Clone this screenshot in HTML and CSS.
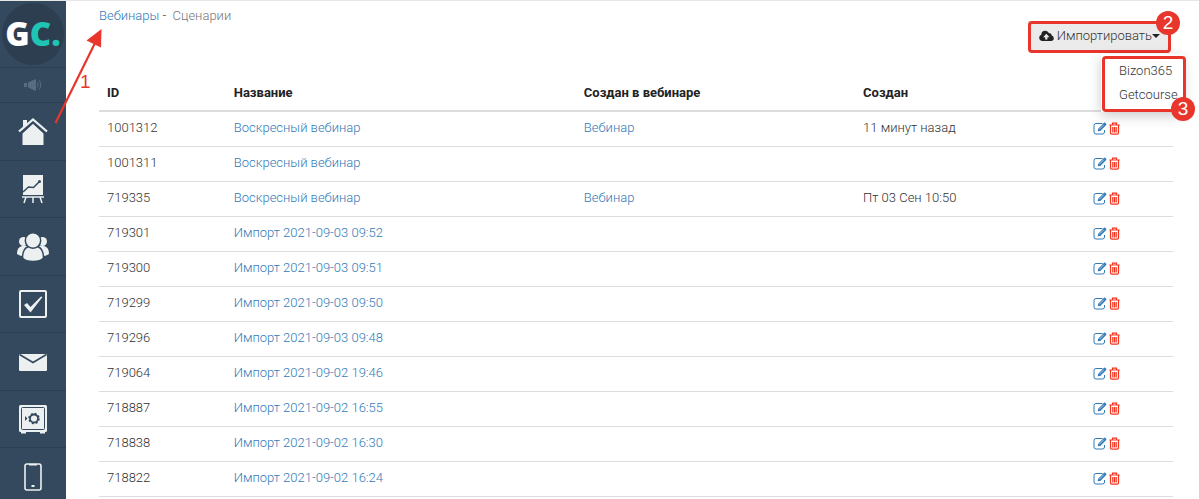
FILE: index.html
```
<!DOCTYPE html>
<html lang="ru">
<head>
    <meta charset="utf-8">
    <title>Сценарии</title>
    <link rel="stylesheet" href="styles.css">
</head>

<body>
    <svg class="sprite" aria-hidden="true">
        <symbol id="edit" viewBox="0 0 14 13">
            <path d="M9.5 1.5H3Q1 1.5 1 3.5v6.500Q1 12 3 12h6.500Q11.500 12 11.500 10V8" fill="none" stroke="currentColor" stroke-width="1"/>
            <path d="M4.700 9.300l.5-2.600 5.800-5.900q.6-.5 1.200 0l1 1q.5.6 0 1.200L7.300 8.900z" fill="currentColor"/>
            <path d="M6.300 7.300l4.500-4.600" stroke="#fff" stroke-width=".6"/>
        </symbol>
        <symbol id="trash" viewBox="0 0 11 13">
            <path d="M.3 3h10.400M3.500 2.800V1.200h4v1.600M1.500 3.500v7.300q0 1.400 1.300 1.400h5.400q1.300 0 1.300-1.400V3.500M3.800 5v5.500M5.500 5v5.500M7.200 5v5.500" fill="none" stroke="currentColor" stroke-width="1.200"/>
        </symbol>
    </svg>

    <nav class="sidebar">
        <a class="logo" href="#" aria-label="GetCourse"><span class="logo-circle">G<span class="logo-c">C.</span></span></a>
        <a class="notice" href="#" aria-label="Уведомления">
            <svg width="20" height="14" viewBox="0 0 20 14" fill="#586d84">
                <path d="M1 5h3v4H1zM5 4.500L13 1v12L5 9.500z"/>
                <path d="M14.500 4.500q1.500 2.500 0 5M16.500 2.500q3 4.500 0 9" fill="none" stroke="#586d84"/>
            </svg>
        </a>
        <ul class="menu">
            <li><a href="#" aria-label="Главная">
                <svg width="30" height="28" viewBox="0 0 30 28" fill="#ecf0f1">
                    <path d="M5 2h4v5l-4 4zM4.500 15L15 5.500 25.500 15v12h-21z"/>
                    <path d="M2.500 14.500L15 3l12.500 11.500" fill="none" stroke="#34495e" stroke-width="4"/>
                    <path d="M1 13.500L15 1.500l14 12" fill="none" stroke="#ecf0f1" stroke-width="2.200"/>
                </svg>
            </a></li>
            <li><a href="#" aria-label="Статистика">
                <svg width="22" height="30" viewBox="0 0 22 30" fill="#ecf0f1">
                    <path d="M1 1h20v20H1z"/>
                    <path d="M1 18l5.500-5 5 .5L17 8" fill="none" stroke="#34495e" stroke-width="1.500"/>
                    <circle cx="17.500" cy="7.500" r="1.500" fill="#34495e"/>
                    <path d="M0 23h22M4 23l-2 6M11 23v6M18 23l2 6" fill="none" stroke="#ecf0f1" stroke-width="1.500"/>
                </svg>
            </a></li>
            <li><a href="#" aria-label="Пользователи">
                <svg width="34" height="30" viewBox="0 0 34 30" fill="#ecf0f1">
                    <circle cx="7.500" cy="9.500" r="4.500"/>
                    <circle cx="26.500" cy="9.500" r="4.500"/>
                    <path d="M1 22q0-7 5-8h6v10q-7 1-11-2zM33 22q0-7-5-8h-6v10q7 1 11-2z"/>
                    <path d="M6.500 26q0-9.500 6-11.500h9q6 2 6 11.500-3 3.500-10.500 3.500T6.500 26z" stroke="#34495e" stroke-width="1.500"/>
                    <circle cx="17" cy="8.500" r="7.700" stroke="#34495e" stroke-width="1.500"/>
                </svg>
            </a></li>
            <li><a href="#" aria-label="Задачи">
                <svg width="30" height="30" viewBox="0 0 30 30" fill="#ecf0f1">
                    <rect x="2" y="2" width="26" height="26" rx="1" fill="none" stroke="#ecf0f1" stroke-width="2"/>
                    <path d="M6 16l3-2 3.500 4L23 7.500l1.500.5L12.500 23.500z"/>
                </svg>
            </a></li>
            <li><a href="#" aria-label="Сообщения">
                <svg width="28" height="18" viewBox="0 0 28 18" fill="#ecf0f1">
                    <rect x="0" y="1" width="28" height="17" rx="1"/>
                    <path d="M.5 1.500L14 9.500l13.500-8" fill="none" stroke="#34495e" stroke-width="1.600"/>
                </svg>
            </a></li>
            <li><a href="#" aria-label="Финансы">
                <svg width="30" height="30" viewBox="0 0 30 30" fill="#ecf0f1">
                    <rect x="1" y="1" width="28" height="27" rx="1.500"/>
                    <path d="M3 28h5v1.500H3zM22 28h5v1.500h-5z"/>
                    <rect x="3.500" y="3.500" width="23" height="22" rx="1" fill="none" stroke="#34495e"/>
                    <circle cx="16" cy="14.500" r="4" fill="none" stroke="#34495e" stroke-width="1.800"/>
                    <circle cx="16" cy="14.500" r="5" fill="none" stroke="#34495e" stroke-width="1.500" stroke-dasharray="2 1.927"/>
                    <path d="M7 12l2.500 2.500L7 17z" fill="#34495e"/>
                </svg>
            </a></li>
            <li><a href="#" aria-label="Приложение">
                <svg width="18" height="28" viewBox="0 0 18 28">
                    <rect x="1" y="1" width="16" height="26" rx="2" fill="none" stroke="#ecf0f1" stroke-width="1.600"/>
                    <path d="M5 1h8v1.600H5zM7.500 22h3v2h-3z" fill="#ecf0f1"/>
                </svg>
            </a></li>
        </ul>
    </nav>

    <main>
        <div class="breadcrumb"><a href="#">Вебинары</a> - &nbsp;<span>Сценарии</span></div>

        <div class="toolbar">
            <div class="dropdown">
                <button class="btn-import" type="button">
                    <svg width="15" height="12" viewBox="0 0 15 12" fill="#222">
                        <path d="M3.500 11Q.2 10.800.2 7.800.2 5.500 2.300 4.800 2.300.8 6.300.8q2.800 0 3.800 2.500 2.500-.4 2.600 2.200 2.100.6 2.100 2.700 0 2.700-2.800 2.800z"/>
                        <path d="M7.300 3.800l3.200 3.400H8.400V9.500H6.200V7.200H4.100z" fill="#ebebeb"/>
                    </svg>
                    Импортировать<span class="caret"></span>
                </button>
                <span class="mark mark-button"><b>2</b></span>
                <ul class="dropdown-menu">
                    <li><a href="#">Bizon365</a></li>
                    <li><a href="#">Getcourse</a></li>
                    <li class="mark mark-menu"><b>3</b></li>
                </ul>
            </div>
        </div>

        <table>
            <thead>
                <tr>
                    <th class="col-id">ID</th>
                    <th class="col-name">Название</th>
                    <th class="col-webinar">Создан в вебинаре</th>
                    <th class="col-created">Создан</th>
                    <th></th>
                </tr>
            </thead>
            <tbody>
                <tr>
                    <td>1001312</td><td><a href="#">Воскресный вебинар</a></td><td><a href="#">Вебинар</a></td><td>11 минут назад</td>
                    <td class="actions"><a href="#" aria-label="Изменить"><svg width="14" height="13"><use href="#edit"/></svg></a><a class="delete" href="#" aria-label="Удалить"><svg width="11" height="13"><use href="#trash"/></svg></a></td>
                </tr>
                <tr>
                    <td>1001311</td><td><a href="#">Воскресный вебинар</a></td><td></td><td></td>
                    <td class="actions"><a href="#" aria-label="Изменить"><svg width="14" height="13"><use href="#edit"/></svg></a><a class="delete" href="#" aria-label="Удалить"><svg width="11" height="13"><use href="#trash"/></svg></a></td>
                </tr>
                <tr>
                    <td>719335</td><td><a href="#">Воскресный вебинар</a></td><td><a href="#">Вебинар</a></td><td>Пт 03 Сен 10:50</td>
                    <td class="actions"><a href="#" aria-label="Изменить"><svg width="14" height="13"><use href="#edit"/></svg></a><a class="delete" href="#" aria-label="Удалить"><svg width="11" height="13"><use href="#trash"/></svg></a></td>
                </tr>
                <tr>
                    <td>719301</td><td><a href="#">Импорт 2021-09-03 09:52</a></td><td></td><td></td>
                    <td class="actions"><a href="#" aria-label="Изменить"><svg width="14" height="13"><use href="#edit"/></svg></a><a class="delete" href="#" aria-label="Удалить"><svg width="11" height="13"><use href="#trash"/></svg></a></td>
                </tr>
                <tr>
                    <td>719300</td><td><a href="#">Импорт 2021-09-03 09:51</a></td><td></td><td></td>
                    <td class="actions"><a href="#" aria-label="Изменить"><svg width="14" height="13"><use href="#edit"/></svg></a><a class="delete" href="#" aria-label="Удалить"><svg width="11" height="13"><use href="#trash"/></svg></a></td>
                </tr>
                <tr>
                    <td>719299</td><td><a href="#">Импорт 2021-09-03 09:50</a></td><td></td><td></td>
                    <td class="actions"><a href="#" aria-label="Изменить"><svg width="14" height="13"><use href="#edit"/></svg></a><a class="delete" href="#" aria-label="Удалить"><svg width="11" height="13"><use href="#trash"/></svg></a></td>
                </tr>
                <tr>
                    <td>719296</td><td><a href="#">Импорт 2021-09-03 09:48</a></td><td></td><td></td>
                    <td class="actions"><a href="#" aria-label="Изменить"><svg width="14" height="13"><use href="#edit"/></svg></a><a class="delete" href="#" aria-label="Удалить"><svg width="11" height="13"><use href="#trash"/></svg></a></td>
                </tr>
                <tr>
                    <td>719064</td><td><a href="#">Импорт 2021-09-02 19:46</a></td><td></td><td></td>
                    <td class="actions"><a href="#" aria-label="Изменить"><svg width="14" height="13"><use href="#edit"/></svg></a><a class="delete" href="#" aria-label="Удалить"><svg width="11" height="13"><use href="#trash"/></svg></a></td>
                </tr>
                <tr>
                    <td>718887</td><td><a href="#">Импорт 2021-09-02 16:55</a></td><td></td><td></td>
                    <td class="actions"><a href="#" aria-label="Изменить"><svg width="14" height="13"><use href="#edit"/></svg></a><a class="delete" href="#" aria-label="Удалить"><svg width="11" height="13"><use href="#trash"/></svg></a></td>
                </tr>
                <tr>
                    <td>718838</td><td><a href="#">Импорт 2021-09-02 16:30</a></td><td></td><td></td>
                    <td class="actions"><a href="#" aria-label="Изменить"><svg width="14" height="13"><use href="#edit"/></svg></a><a class="delete" href="#" aria-label="Удалить"><svg width="11" height="13"><use href="#trash"/></svg></a></td>
                </tr>
                <tr>
                    <td>718822</td><td><a href="#">Импорт 2021-09-02 16:24</a></td><td></td><td></td>
                    <td class="actions"><a href="#" aria-label="Изменить"><svg width="14" height="13"><use href="#edit"/></svg></a><a class="delete" href="#" aria-label="Удалить"><svg width="11" height="13"><use href="#trash"/></svg></a></td>
                </tr>
            </tbody>
        </table>
    </main>

    <div class="arrow">
        <svg width="50" height="96" viewBox="0 0 50 96">
            <path d="M1.500 94L42 12" stroke="#e8362c" stroke-width="2.200"/>
            <path d="M47.500 0L47 18.500 32.500 11.500z" fill="#e8362c"/>
        </svg>
        <span>1</span>
    </div>
</body>

</html>
```
FILE: styles.css
```
* {
    box-sizing: border-box;
}

body {
    display: flex;
    height: 100vh;
    margin: 0;
    overflow: hidden;
    border-top: 1px solid #e7e7e7;
    background-color: #fff;
    color: #333;
    font-family: Roboto, "Noto Sans", sans-serif;
    font-size: 13px;
    font-weight: 300;
    line-height: 18px;
}

a {
    color: #337ab7;
    text-decoration: none;
}

ul {
    margin: 0;
    padding: 0;
    list-style: none;
}

svg {
    display: block;
}

.sprite {
    display: none;
}

.sidebar {
    flex: none;
    width: 66px;
    overflow: hidden;
    background-color: #34495e;
}

.sidebar a {
    display: flex;
    align-items: center;
    justify-content: center;
    height: 100%;
}

.sidebar .logo {
    height: 67px;
    border-bottom: 1px solid #2c3e50;
}

.logo-circle {
    display: flex;
    align-items: center;
    justify-content: center;
    width: 62px;
    height: 62px;
    border-radius: 50%;
    background-color: #2c3e50;
    color: #fff;
    font-family: "Open Sans", sans-serif;
    font-size: 33px;
    font-weight: 800;
}

.logo-c {
    color: #1fc4b4;
}

.sidebar .notice {
    height: 35px;
    border-bottom: 1px solid #2c3e50;
}

.menu li {
    height: 58px;
    border-bottom: 1px solid #2c3e50;
}

.menu li:nth-child(even) {
    height: 57px;
}

main {
    flex: 1;
    min-width: 0;
    padding: 6px 26px 0 33px;
}

.breadcrumb span {
    color: #777;
}

.toolbar {
    display: flex;
    justify-content: flex-end;
    margin: -4px 2px 24px 0;
}

.dropdown {
    position: relative;
}

.btn-import {
    display: flex;
    align-items: center;
    height: 30px;
    padding: 0 11px;
    border: 0;
    background-color: #ebebeb;
    color: #333;
    font: inherit;
}

.btn-import svg {
    margin-right: 3px;
}

.caret {
    border: 4px solid transparent;
    border-top-color: #222;
    border-bottom: 0;
}

.dropdown-menu {
    position: absolute;
    top: 33px;
    right: -12px;
    width: 82px;
    padding: 5px 0;
    background-color: #fff;
    box-shadow: 0 4px 12px rgba(0, 0, 0, .2);
}

.dropdown-menu a {
    display: block;
    padding: 3px 0 3px 18px;
    color: #333;
}

/* red frames with a numbered badge in the corner */
.mark {
    position: absolute;
    border: 3px solid #e8362c;
    border-radius: 4px;
    pointer-events: none;
}

.mark b {
    position: absolute;
    right: -12px;
    width: 24px;
    height: 24px;
    border-radius: 50%;
    background-color: #e8362c;
    color: #fff;
    font-family: "Liberation Sans", sans-serif;
    font-size: 19px;
    font-weight: 400;
    line-height: 24px;
    text-align: center;
}

.mark-button {
    inset: 0 0 -2px 0;
}

.mark-button b {
    top: -13px;
}

.mark-menu {
    inset: 2px -3px 0 1px;
}

.mark-menu b {
    bottom: -12px;
}

table {
    width: 100%;
    border-collapse: collapse;
    table-layout: fixed;
}

th,
td {
    height: 35px;
    padding: 0 8px 2px;
    border-bottom: 1px solid #ddd;
    text-align: left;
}

th {
    height: 36px;
    padding-bottom: 0;
    border-bottom-width: 2px;
    color: #222;
    font-weight: 700;
}

.col-id {
    width: 11.8%;
}

.col-name {
    width: 32.6%;
}

.col-webinar {
    width: 26%;
}

.col-created {
    width: 21.4%;
}

.actions a {
    display: inline-block;
    margin-right: 2px;
    vertical-align: middle;
}

.actions .delete {
    color: #f5331e;
}

.arrow {
    position: absolute;
    top: 29px;
    left: 54px;
    color: #e8362c;
}

.arrow span {
    position: absolute;
    top: 44px;
    left: 26px;
    font-family: "Liberation Sans", sans-serif;
    font-size: 19px;
}
```
